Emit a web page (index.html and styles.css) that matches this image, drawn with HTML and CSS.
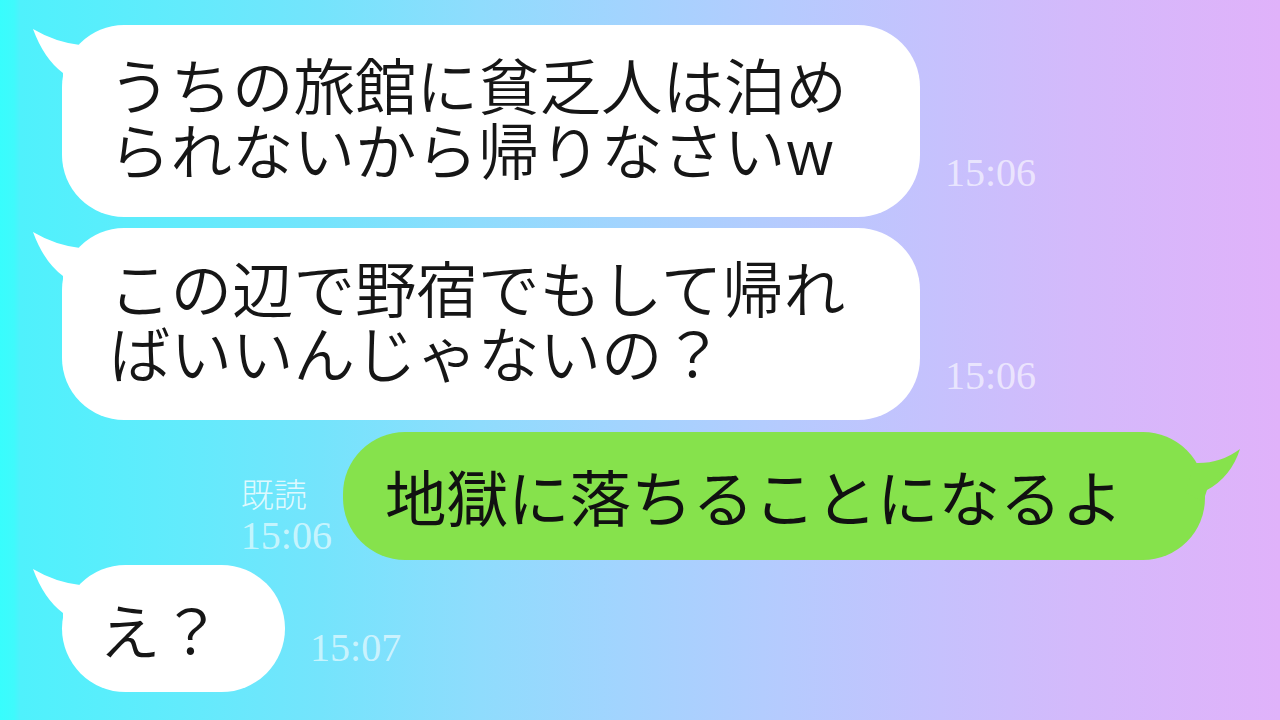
FILE: index.html
```html
<!DOCTYPE html>
<html lang="ja">
<head>
<meta charset="utf-8">
<title>Chat</title>
<link rel="stylesheet" href="styles.css">
</head>
<body>
<main class="chat">
  <div class="row row-first left">
    <div class="bubble white two-line">
      <svg class="tail tail-left" viewBox="0 0 80 70" width="80" height="70"><path d="M3,4 Q25,17 50,20 L60,60 L33,60 L33,48 Q14,34 3,4 Z" fill="#fff"/></svg>
      <p class="msg">うちの旅館に貧乏人は泊め<br>られないから帰りなさいw</p>
    </div>
    <span class="time">15:06</span>
  </div>
  <div class="row row-second left">
    <div class="bubble white two-line">
      <svg class="tail tail-left" viewBox="0 0 80 70" width="80" height="70"><path d="M3,4 Q25,17 50,20 L60,60 L33,60 L33,48 Q14,34 3,4 Z" fill="#fff"/></svg>
      <p class="msg">この辺で野宿でもして帰れ<br>ばいいんじゃないの？</p>
    </div>
    <span class="time">15:06</span>
  </div>
  <div class="row row-third right">
    <div class="status">
      <span class="read">既読</span>
      <span class="time time-own">15:06</span>
    </div>
    <div class="bubble green">
      <svg class="tail tail-right" viewBox="0 0 80 80" width="80" height="80"><path d="M75,17 Q55,32 30,31 L20,60 L38,70 L42,58 Q66,45 75,17 Z" fill="#86e24c"/></svg>
      <p class="msg msg-own">地獄に落ちることになるよ</p>
    </div>
  </div>
  <div class="row row-fourth left">
    <div class="bubble white short">
      <svg class="tail tail-left" viewBox="0 0 80 70" width="80" height="70"><path d="M3,4 Q25,17 50,20 L60,60 L33,60 L33,48 Q14,34 3,4 Z" fill="#fff"/></svg>
      <p class="msg">え？</p>
    </div>
    <span class="time">15:07</span>
  </div>
</main>
</body>
</html>
```

FILE: styles.css
```css
html, body {
  margin: 0;
  padding: 0;
}

body {
  width: 1280px;
  height: 720px;
  overflow: hidden;
  background: linear-gradient(90deg,
    #38fdfd 0px,
    #3ffafc 14px,
    #4ff1fc 20px,
    #62ebfc 180px,
    #74e4fc 320px,
    #8fdcfd 480px,
    #a2d4fe 620px,
    #b5cbfe 780px,
    #c6c1fd 940px,
    #d4b9fb 1080px,
    #e0b2fa 1280px);
  font-family: "Noto Sans CJK JP", "Noto Sans", sans-serif;
}

.chat {
  display: flex;
  flex-direction: column;
  padding-top: 25px;
}

.row {
  display: flex;
  align-items: flex-end;
}

.row.left {
  padding-left: 62px;
  gap: 25px;
}

.row.right {
  justify-content: flex-end;
  padding-right: 75px;
  gap: 11px;
}

.row-second { margin-top: 11px; }
.row-third { margin-top: 12px; }
.row-fourth { margin-top: 5px; }

.bubble {
  position: relative;
  border-radius: 62px;
}

.bubble.white {
  background: #ffffff;
}

.bubble.green {
  background: #86e24c;
  border-radius: 62px;
  padding: 31px 82px 32px 42px;
}

.bubble.two-line {
  box-sizing: border-box;
  width: 858px;
  padding: 26px 40px 36px 47px;
}

.bubble.short {
  padding: 31px 63px 31px 37px;
  border-radius: 64px;
}

.tail {
  position: absolute;
  top: 0;
  display: block;
}

.tail-left {
  left: -32px;
}

.tail-right {
  right: -40px;
}

.msg {
  position: relative;
  margin: 0;
  font-size: 61.5px;
  line-height: 65px;
  font-weight: 350;
  color: #161616;
  white-space: nowrap;
}

.msg.msg-own {
  font-weight: 400;
  color: #111;
}

.time {
  font-family: "Liberation Serif", "Times New Roman", serif;
  font-size: 40px;
  line-height: 40px;
  color: rgba(255, 255, 255, 0.62);
  margin-bottom: 24px;
}

.status {
  display: flex;
  flex-direction: column;
  align-items: flex-start;
  gap: 5px;
}

.read {
  font-family: "Noto Sans CJK JP", sans-serif;
  font-weight: 300;
  font-size: 33px;
  line-height: 36px;
  color: rgba(255, 255, 255, 0.8);
}

.time.time-own {
  margin-bottom: 4px;
}
```
